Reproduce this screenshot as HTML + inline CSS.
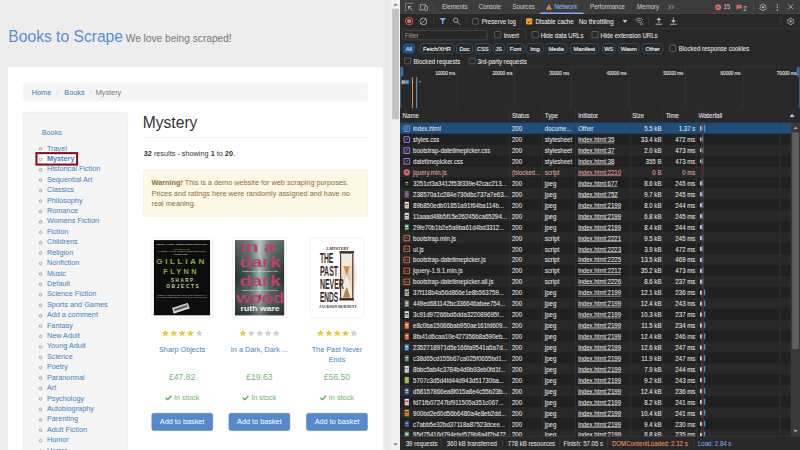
<!DOCTYPE html>
<html><head><meta charset="utf-8"><style>
*{box-sizing:border-box;margin:0;padding:0}
html,body{width:800px;height:450px;overflow:hidden;background:#ededed}
#root{position:absolute;left:0;top:0;width:1536px;height:864px;transform:scale(0.5208333);transform-origin:0 0;font-family:"Liberation Sans",sans-serif;overflow:hidden}
.a{position:absolute;white-space:nowrap}
#page{position:absolute;left:0;top:0;width:751px;height:864px;background:#ededed;overflow:hidden;color:#333;font-size:14px;line-height:20px}
#sb{position:absolute;left:751px;top:0;width:17px;height:864px;background:#f1f1f1}
#dt{position:absolute;left:768px;top:0;width:768px;height:864px;background:#282828;color:#e3e3e3;font-size:12px;overflow:hidden}
.bc{color:#ccc;padding:0 7.4px}
.lk{color:#337ab7}
.li{position:absolute;left:76px;top:0;height:20px;white-space:nowrap;color:#4380c2}
.li i{position:absolute;left:-1px;top:9px;width:6px;height:6px;border:1.3px solid #666;border-radius:50%}
.li span{position:absolute;left:14px;top:0}
.star{position:absolute;width:15px;height:15px}
.btn{position:absolute;height:34px;width:118px;background:#5589cc;border:1px solid #4f83c6;border-radius:4px;color:#fff;text-align:center;line-height:32px;font-size:14px}
.price{position:absolute;color:#72b572;font-size:16.5px;text-align:center;line-height:20px}
.stock{position:absolute;color:#6bb26b;font-size:14px;text-align:center;line-height:20px}
.ttl{position:absolute;color:#4783c4;font-size:14px;text-align:center;line-height:20px}
.t12{font-size:12.7px;line-height:14px;color:#ececec;transform:scaleX(.92);transform-origin:0 50%;-webkit-text-stroke:0.1px currentColor}
.r{transform-origin:100% 50%}
.t11{font-size:11.4px;line-height:14px;color:#e8e8e8;-webkit-text-stroke:.2px #e8e8e8}
.ic{width:14px;height:14px;display:block}
.cb{width:12.5px;height:12.5px;border:1.5px solid #8a8a8a;border-radius:2px}
.chip{top:82.5px;height:20px;border:1.5px solid #31669a;border-radius:7px;color:#f0f0f0;font-size:11px;line-height:18.5px;text-align:center}
.thumb{position:absolute;background:#fff;border:1px solid #e6e6e6;border-radius:4px;padding:4px}
</style></head><body><div id="root">
<div id="page">
<div class="a" style="left:16px;top:52px;font-size:30px;color:#5a8dd0;line-height:36px">Books to Scrape</div><div class="a" style="left:241.4px;top:54px;font-size:19.5px;color:#777;line-height:38px">We love being scraped!</div>
<div class="a" style="left:15px;top:129px;width:720px;height:760px;background:#fff"></div>
<div class="a" style="left:44px;top:159px;width:662px;height:36px;background:#f5f5f5;border-radius:4px"></div>
<div class="a" style="left:61px;top:167px;color:#337ab7">Home</div>
<div class="a" style="left:108px;top:167px;color:#ccc">/</div>
<div class="a" style="left:123.4px;top:167px;color:#337ab7">Books</div>
<div class="a" style="left:171.8px;top:167px;color:#ccc">/</div>
<div class="a" style="left:183.8px;top:167px;color:#777">Mystery</div>
<div class="a" style="left:44px;top:215px;width:201px;height:700px;background:#f5f5f5;border:1px solid #e3e3e3;border-radius:4px"></div>
<div class="a" style="left:80px;top:244px;color:#4380c2">Books</div>
<div class="a" style="left:68px;top:291.8px;width:82px;height:26.7px;border:4px solid #880d1f;background:#fff"></div>
<div class="li" style="top:274px"><i></i><span>Travel</span></div>
<div class="li" style="top:294px"><i></i><span style="font-weight:bold">Mystery</span></div>
<div class="li" style="top:314px"><i></i><span>Historical Fiction</span></div>
<div class="li" style="top:334px"><i></i><span>Sequential Art</span></div>
<div class="li" style="top:354px"><i></i><span>Classics</span></div>
<div class="li" style="top:374px"><i></i><span>Philosophy</span></div>
<div class="li" style="top:394px"><i></i><span>Romance</span></div>
<div class="li" style="top:414px"><i></i><span>Womens Fiction</span></div>
<div class="li" style="top:434px"><i></i><span>Fiction</span></div>
<div class="li" style="top:454px"><i></i><span>Childrens</span></div>
<div class="li" style="top:474px"><i></i><span>Religion</span></div>
<div class="li" style="top:494px"><i></i><span>Nonfiction</span></div>
<div class="li" style="top:514px"><i></i><span>Music</span></div>
<div class="li" style="top:534px"><i></i><span>Default</span></div>
<div class="li" style="top:554px"><i></i><span>Science Fiction</span></div>
<div class="li" style="top:574px"><i></i><span>Sports and Games</span></div>
<div class="li" style="top:594px"><i></i><span>Add a comment</span></div>
<div class="li" style="top:614px"><i></i><span>Fantasy</span></div>
<div class="li" style="top:634px"><i></i><span>New Adult</span></div>
<div class="li" style="top:654px"><i></i><span>Young Adult</span></div>
<div class="li" style="top:674px"><i></i><span>Science</span></div>
<div class="li" style="top:694px"><i></i><span>Poetry</span></div>
<div class="li" style="top:714px"><i></i><span>Paranormal</span></div>
<div class="li" style="top:734px"><i></i><span>Art</span></div>
<div class="li" style="top:754px"><i></i><span>Psychology</span></div>
<div class="li" style="top:774px"><i></i><span>Autobiography</span></div>
<div class="li" style="top:794px"><i></i><span>Parenting</span></div>
<div class="li" style="top:814px"><i></i><span>Adult Fiction</span></div>
<div class="li" style="top:834px"><i></i><span>Humor</span></div>
<div class="li" style="top:854px"><i></i><span>Horror</span></div>
<div class="li" style="top:874px"><i></i><span>Erotica</span></div>
<div class="a" style="left:274px;top:217px;font-size:30px;line-height:36px;color:#333">Mystery</div>
<div class="a" style="left:276px;top:263px;width:430px;height:1px;background:#eee"></div>
<div class="a" style="left:276px;top:284px"><b>32</b> results - showing <b>1</b> to <b>20</b>.</div>
<div class="a" style="left:275px;top:325px;width:431px;height:91px;background:#fcf8e3;border:1px solid #faebcc;border-radius:4px;padding:14px 15px;color:#8a6d3b;white-space:normal;line-height:20.5px"><b>Warning!</b> This is a demo website for web scraping purposes. Prices and ratings here were randomly assigned and have no real meaning.</div>
<div class="thumb" style="left:290.4px;top:456px;width:118.5px;height:155px"><svg width="108.5" height="145" viewBox="0 0 108 145" preserveAspectRatio="none" style="display:block"><rect width="108" height="145" fill="#0d0d0d"/>
<g font-family="Liberation Sans" font-weight="bold" text-anchor="start">
<text x="6" y="10.2" font-size="3.6" fill="#bdbdbd" textLength="96" lengthAdjust="spacingAndGlyphs">NEW YORK TIMES BESTSELLER</text>
<text x="37" y="19" font-size="2.8" fill="#7fae4a" textLength="32" lengthAdjust="spacingAndGlyphs">AUTHOR OF THE</text>
<text x="6" y="23.8" font-size="3.4" fill="#7fae4a" textLength="93" lengthAdjust="spacingAndGlyphs">#1 NEW YORK TIMES BESTSELLER</text>
<text x="39" y="28.3" font-size="3.4" fill="#c8c8c8" textLength="27" lengthAdjust="spacingAndGlyphs">GONE GIRL</text>
<text x="5" y="46.8" font-size="12.5" fill="#7fb048" letter-spacing="4" textLength="97" lengthAdjust="spacingAndGlyphs">GILLIAN</text>
<text x="18.5" y="65.6" font-size="12.5" fill="#7fb048" letter-spacing="4" textLength="68" lengthAdjust="spacingAndGlyphs">FLYNN</text>
<text x="33" y="81.3" font-size="8.5" fill="#b7d89a" letter-spacing="3" textLength="45.5" lengthAdjust="spacingAndGlyphs">SHARP</text>
<text x="24" y="92.7" font-size="8.5" fill="#b7d89a" letter-spacing="3" textLength="65.5" lengthAdjust="spacingAndGlyphs">OBJECTS</text>
<text x="6" y="107.6" font-size="3" fill="#9a9a9a" textLength="96" lengthAdjust="spacingAndGlyphs">"DEEPLY UNSETTLING WITH THE POWER OF A</text>
<text x="6" y="112" font-size="3" fill="#9a9a9a" textLength="96" lengthAdjust="spacingAndGlyphs">NIGHTMARE. BEST DEBUT OF THE YEAR" STEPHEN KING</text>
</g>
<g transform="rotate(-18 52 131)"><rect x="36" y="125" width="32" height="11" rx="1" fill="#c4c4c4"/><rect x="39" y="128.5" width="26" height="3.5" fill="#555"/><rect x="36" y="134.5" width="32" height="1.5" fill="#eee"/></g>
</svg></div>
<svg class="star" style="left:310.1px;top:632px" viewBox="0 0 24 24"><path fill="#e3cc2c" d="M12 1.5l3.1 7.2 7.8.6-5.9 5.1 1.8 7.6L12 17.9l-6.8 4.1 1.8-7.6L1.1 9.3l7.8-.6z"/></svg>
<svg class="star" style="left:326.20000000000005px;top:632px" viewBox="0 0 24 24"><path fill="#e3cc2c" d="M12 1.5l3.1 7.2 7.8.6-5.9 5.1 1.8 7.6L12 17.9l-6.8 4.1 1.8-7.6L1.1 9.3l7.8-.6z"/></svg>
<svg class="star" style="left:342.3px;top:632px" viewBox="0 0 24 24"><path fill="#e3cc2c" d="M12 1.5l3.1 7.2 7.8.6-5.9 5.1 1.8 7.6L12 17.9l-6.8 4.1 1.8-7.6L1.1 9.3l7.8-.6z"/></svg>
<svg class="star" style="left:358.40000000000003px;top:632px" viewBox="0 0 24 24"><path fill="#e3cc2c" d="M12 1.5l3.1 7.2 7.8.6-5.9 5.1 1.8 7.6L12 17.9l-6.8 4.1 1.8-7.6L1.1 9.3l7.8-.6z"/></svg>
<svg class="star" style="left:374.5px;top:632px" viewBox="0 0 24 24"><path fill="#d0d0d0" d="M12 1.5l3.1 7.2 7.8.6-5.9 5.1 1.8 7.6L12 17.9l-6.8 4.1 1.8-7.6L1.1 9.3l7.8-.6z"/></svg>
<div class="ttl" style="left:249.60000000000002px;width:200px;top:660px">Sharp Objects</div>
<div class="price" style="left:249.60000000000002px;width:200px;top:713px">£47.82</div>
<div class="stock" style="left:249.60000000000002px;width:200px;top:753px"><svg width="13" height="11" viewBox="0 0 16 13" style="vertical-align:-1px;margin-right:4px"><path d="M1.5 7l4.5 4.5L15 2" stroke="#5fae5f" stroke-width="3.4" fill="none"/></svg>In stock</div>
<div class="btn" style="left:290.6px;top:793px">Add to basket</div>
<div class="thumb" style="left:445.5px;top:456px;width:105.0px;height:155px"><svg width="95" height="145" viewBox="0 0 95 145" preserveAspectRatio="none" style="display:block"><defs>
<linearGradient id="g2h" x1="0" y1="0" x2="1" y2="0"><stop offset="0" stop-color="#22302e"/><stop offset=".3" stop-color="#405552"/><stop offset=".5" stop-color="#9fb4b0"/><stop offset=".7" stop-color="#405552"/><stop offset="1" stop-color="#22302e"/></linearGradient>
<linearGradient id="g2v" x1="0" y1="0" x2="0" y2="1"><stop offset="0" stop-color="#fff" stop-opacity=".25"/><stop offset=".5" stop-color="#fff" stop-opacity="0"/><stop offset="1" stop-color="#1d2624" stop-opacity=".45"/></linearGradient></defs>
<rect width="95" height="145" fill="url(#g2h)"/><rect width="95" height="145" fill="url(#g2v)"/>

<g fill="#b9406f" font-family="Liberation Sans" font-weight="bold">
<text x="11" y="22.5" font-size="29" textLength="66" lengthAdjust="spacingAndGlyphs">in a</text>
<text x="9" y="52.3" font-size="29" textLength="79" lengthAdjust="spacingAndGlyphs">dark</text>
<text x="9" y="88.5" font-size="29" textLength="79" lengthAdjust="spacingAndGlyphs">dark</text>
<text x="2" y="121" font-size="29" textLength="93" lengthAdjust="spacingAndGlyphs">wood</text></g>
<g fill="#e8e8e8" font-family="Liberation Serif" font-style="italic" font-size="5">
<text x="14" y="61" textLength="68" lengthAdjust="spacingAndGlyphs">someone's getting married</text>
<text x="14" y="97" textLength="68" lengthAdjust="spacingAndGlyphs">someone's getting murdered</text></g>
<rect x="46.5" y="104" width="4" height="10" rx="1.5" fill="#c03040"/>
<text x="11" y="137" font-size="13" fill="#f0f0f0" font-family="Liberation Sans" font-weight="bold" textLength="75" lengthAdjust="spacingAndGlyphs">ruth ware</text>
</svg></div>
<svg class="star" style="left:458.5px;top:632px" viewBox="0 0 24 24"><path fill="#e3cc2c" d="M12 1.5l3.1 7.2 7.8.6-5.9 5.1 1.8 7.6L12 17.9l-6.8 4.1 1.8-7.6L1.1 9.3l7.8-.6z"/></svg>
<svg class="star" style="left:474.6px;top:632px" viewBox="0 0 24 24"><path fill="#d0d0d0" d="M12 1.5l3.1 7.2 7.8.6-5.9 5.1 1.8 7.6L12 17.9l-6.8 4.1 1.8-7.6L1.1 9.3l7.8-.6z"/></svg>
<svg class="star" style="left:490.7px;top:632px" viewBox="0 0 24 24"><path fill="#d0d0d0" d="M12 1.5l3.1 7.2 7.8.6-5.9 5.1 1.8 7.6L12 17.9l-6.8 4.1 1.8-7.6L1.1 9.3l7.8-.6z"/></svg>
<svg class="star" style="left:506.8px;top:632px" viewBox="0 0 24 24"><path fill="#d0d0d0" d="M12 1.5l3.1 7.2 7.8.6-5.9 5.1 1.8 7.6L12 17.9l-6.8 4.1 1.8-7.6L1.1 9.3l7.8-.6z"/></svg>
<svg class="star" style="left:522.9px;top:632px" viewBox="0 0 24 24"><path fill="#d0d0d0" d="M12 1.5l3.1 7.2 7.8.6-5.9 5.1 1.8 7.6L12 17.9l-6.8 4.1 1.8-7.6L1.1 9.3l7.8-.6z"/></svg>
<div class="ttl" style="left:398.0px;width:200px;top:660px">In a Dark, Dark ...</div>
<div class="price" style="left:398.0px;width:200px;top:713px">£19.63</div>
<div class="stock" style="left:398.0px;width:200px;top:753px"><svg width="13" height="11" viewBox="0 0 16 13" style="vertical-align:-1px;margin-right:4px"><path d="M1.5 7l4.5 4.5L15 2" stroke="#5fae5f" stroke-width="3.4" fill="none"/></svg>In stock</div>
<div class="btn" style="left:439.0px;top:793px">Add to basket</div>
<div class="thumb" style="left:594.8px;top:456px;width:104.5px;height:155px"><svg width="94.5" height="145" viewBox="0 0 95 145" preserveAspectRatio="none" style="display:block"><defs>
<radialGradient id="g3" cx=".5" cy=".5" r=".5"><stop offset="0" stop-color="#c89a6a" stop-opacity=".75"/><stop offset=".7" stop-color="#d9b894" stop-opacity=".35"/><stop offset="1" stop-color="#fff" stop-opacity="0"/></radialGradient>
<linearGradient id="g3s" x1="0" y1="0" x2="0" y2="1"><stop offset="0" stop-color="#f3e6d2"/><stop offset=".45" stop-color="#d9b58a"/><stop offset=".55" stop-color="#efe2d0"/><stop offset="1" stop-color="#c9955a"/></linearGradient></defs>
<rect width="95" height="145" fill="#fff"/>
<ellipse cx="68" cy="68" rx="22" ry="54" fill="url(#g3)" opacity=".8"/>
<path d="M57 27h18q0 20-8 38q-1 3 0 6q8 18 8 39H57q0-21 8-39q1-3 0-6q-8-18-8-38z" fill="#f4ebe0"/>
<path d="M60 50h12q-3 10-5 16h-2q-2-6-5-16z" fill="#c98d52"/><path d="M59 110q4-14 7-20q3 6 7 20z" fill="#b8844e"/>
<rect x="52" y="21" width="28" height="5" fill="#4a3322"/><rect x="52" y="111" width="28" height="5" fill="#4a3322"/>
<rect x="53" y="26" width="2.5" height="85" fill="#5a3e28"/><rect x="76.5" y="26" width="2.5" height="85" fill="#5a3e28"/>
<text x="25.4" y="19" font-size="6.5" fill="#3a2a1e" font-style="italic" font-weight="bold" font-family="Liberation Serif" textLength="44" lengthAdjust="spacingAndGlyphs">A MYSTERY</text>
<g fill="#3b2a1f" font-family="Liberation Sans" font-weight="bold">
<text x="14.4" y="44.2" font-size="28" textLength="25.8" lengthAdjust="spacingAndGlyphs">THE</text>
<text x="14.4" y="68.5" font-size="27" textLength="35" lengthAdjust="spacingAndGlyphs">PAST</text>
<text x="14.4" y="93.9" font-size="27" textLength="46" lengthAdjust="spacingAndGlyphs">NEVER</text>
<text x="14.4" y="119.3" font-size="27" textLength="35" lengthAdjust="spacingAndGlyphs">ENDS</text></g>
<text x="12.6" y="131" font-size="7" fill="#3a2a1e" font-weight="bold" font-family="Liberation Serif" textLength="73" lengthAdjust="spacingAndGlyphs">JACKSON BURNETT</text>
</svg></div>
<svg class="star" style="left:607.5px;top:632px" viewBox="0 0 24 24"><path fill="#e3cc2c" d="M12 1.5l3.1 7.2 7.8.6-5.9 5.1 1.8 7.6L12 17.9l-6.8 4.1 1.8-7.6L1.1 9.3l7.8-.6z"/></svg>
<svg class="star" style="left:623.6px;top:632px" viewBox="0 0 24 24"><path fill="#e3cc2c" d="M12 1.5l3.1 7.2 7.8.6-5.9 5.1 1.8 7.6L12 17.9l-6.8 4.1 1.8-7.6L1.1 9.3l7.8-.6z"/></svg>
<svg class="star" style="left:639.7px;top:632px" viewBox="0 0 24 24"><path fill="#e3cc2c" d="M12 1.5l3.1 7.2 7.8.6-5.9 5.1 1.8 7.6L12 17.9l-6.8 4.1 1.8-7.6L1.1 9.3l7.8-.6z"/></svg>
<svg class="star" style="left:655.8px;top:632px" viewBox="0 0 24 24"><path fill="#e3cc2c" d="M12 1.5l3.1 7.2 7.8.6-5.9 5.1 1.8 7.6L12 17.9l-6.8 4.1 1.8-7.6L1.1 9.3l7.8-.6z"/></svg>
<svg class="star" style="left:671.9px;top:632px" viewBox="0 0 24 24"><path fill="#d0d0d0" d="M12 1.5l3.1 7.2 7.8.6-5.9 5.1 1.8 7.6L12 17.9l-6.8 4.1 1.8-7.6L1.1 9.3l7.8-.6z"/></svg>
<div class="ttl" style="left:547.0px;width:200px;top:660px">The Past Never</div>
<div class="ttl" style="left:547.0px;width:200px;top:680px">Ends</div>
<div class="price" style="left:547.0px;width:200px;top:713px">£56.50</div>
<div class="stock" style="left:547.0px;width:200px;top:753px"><svg width="13" height="11" viewBox="0 0 16 13" style="vertical-align:-1px;margin-right:4px"><path d="M1.5 7l4.5 4.5L15 2" stroke="#5fae5f" stroke-width="3.4" fill="none"/></svg>In stock</div>
<div class="btn" style="left:588.0px;top:793px">Add to basket</div>
</div>
<div id="sb"><div style="position:absolute;left:2px;top:17px;width:13px;height:212px;background:#c1c1c1"></div><svg style="position:absolute;left:4px;top:6px" width="9" height="5" viewBox="0 0 9 5"><path d="M0 5h9L4.5 0z" fill="#707070"/></svg><svg style="position:absolute;left:4px;top:851px" width="9" height="5" viewBox="0 0 9 5"><path d="M0 0h9L4.5 5z" fill="#707070"/></svg></div>
<div id="dt">
<div class="a" style="left:0;top:0;width:768px;height:27px;background:#3c3c3c;border-bottom:1px solid #4b4b4b"></div>
<svg class="a" style="left:9px;top:5px" width="17" height="17" viewBox="0 0 16 16"><path d="M1 1.5h2.2M4.8 1.5h2.2M8.6 1.5h2.2M12.4 1.5h2.1M1.5 3.3v2.2M1.5 7.1v2.2M1.5 10.9v2.2M1.5 14.5h2" stroke="#c4c4c4" stroke-width="1.3" fill="none"/><path d="M14.5 14.5L7 7M7 7v5M7 7h5" stroke="#c4c4c4" stroke-width="1.5" fill="none"/></svg>
<svg class="a" style="left:36px;top:5px" width="18" height="17" viewBox="0 0 18 16"><path d="M3 12V3.5h10.5V6" stroke="#c4c4c4" stroke-width="1.3" fill="none"/><path d="M0.8 13.5h10" stroke="#c4c4c4" stroke-width="1.4"/><rect x="11.5" y="6.5" width="5.5" height="8" rx="1" stroke="#c4c4c4" stroke-width="1.3" fill="none"/></svg>
<div class="a" style="left:64px;top:6px;width:1px;height:15px;background:#5a5a5a"></div>
<div class="a t12" style="left:80.6px;top:7px;color:#c7c7c7;font-size:12.7px">Elements</div>
<div class="a t12" style="left:151.2px;top:7px;color:#c7c7c7;font-size:12.7px">Console</div>
<div class="a t12" style="left:216px;top:7px;color:#c7c7c7;font-size:12.7px">Sources</div>
<div class="a t12" style="left:296px;top:7px;color:#8ab4f8;font-size:13.2px">Network</div>
<div class="a t12" style="left:364.8px;top:7px;color:#c7c7c7;font-size:12.7px">Performance</div>
<div class="a t12" style="left:454.5px;top:7px;color:#c7c7c7;font-size:12.7px">Memory</div>
<svg class="a" style="left:280px;top:6.5px" width="12" height="12" viewBox="0 0 12 12"><path d="M6 0.8L11.5 11H0.5z" fill="#f28b54"/><path d="M6 4.2v3.6M6 8.8v1.2" stroke="#3c3c3c" stroke-width="1.3"/></svg>
<div class="a" style="left:268.8px;top:24px;width:84px;height:3px;background:#7cacf8;border-radius:2px 2px 0 0"></div>
<svg class="a" style="left:514px;top:8px" width="13" height="11" viewBox="0 0 13 11"><path d="M1 1l4.5 4.5L1 10M7 1l4.5 4.5L7 10" stroke="#c4c4c4" stroke-width="1.3" fill="none"/></svg>
<svg class="a" style="left:605px;top:7.5px" width="12" height="12" viewBox="0 0 12 12"><circle cx="6" cy="6" r="5.8" fill="#e46962"/><path d="M3.8 3.8l4.4 4.4M8.2 3.8L3.8 8.2" stroke="#3c3c3c" stroke-width="1.3"/></svg>
<div class="a t12" style="left:621px;top:7px;color:#c7c7c7">15</div>
<svg class="a" style="left:644.5px;top:7.5px" width="12" height="12" viewBox="0 0 12 12"><path d="M1 1h10v7.5H4L1 11z" fill="#e46962"/><path d="M6 3v2.5" stroke="#3c3c3c" stroke-width="1.2"/></svg>
<div class="a t12" style="left:658.6px;top:10px;color:#c7c7c7">2</div>
<div class="a" style="left:677.8px;top:6px;width:1px;height:15px;background:#5a5a5a"></div>
<svg class="a" style="left:689px;top:5.5px" width="16" height="16" viewBox="0 0 16 16"><path d="M6.56 3.00 L6.95 1.48 L9.05 1.48 L9.44 3.00 L11.61 4.26 L13.12 3.83 L14.17 5.65 L13.05 6.75 L13.05 9.25 L14.17 10.35 L13.12 12.17 L11.61 11.74 L9.44 13.00 L9.05 14.52 L6.95 14.52 L6.56 13.00 L4.39 11.74 L2.88 12.17 L1.83 10.35 L2.95 9.25 L2.95 6.75 L1.83 5.65 L2.88 3.83 L4.39 4.26z" fill="none" stroke="#c4c4c4" stroke-width="1.4" stroke-linejoin="round"/><circle cx="8" cy="8" r="2.2" fill="#c4c4c4"/></svg>
<svg class="a" style="left:722px;top:5.5px" width="5" height="16" viewBox="0 0 5 16"><circle cx="2.5" cy="3" r="1.4" fill="#c4c4c4"/><circle cx="2.5" cy="8" r="1.4" fill="#c4c4c4"/><circle cx="2.5" cy="13" r="1.4" fill="#c4c4c4"/></svg>
<svg class="a" style="left:744px;top:7px" width="12" height="12" viewBox="0 0 12 12"><path d="M1 1l10 10M11 1L1 11" stroke="#c4c4c4" stroke-width="1.5"/></svg>
<div class="a" style="left:0;top:28px;width:768px;height:27px;background:#282828;border-bottom:1px solid #3d3d3d"></div>
<svg class="a" style="left:8.5px;top:32px" width="17" height="17" viewBox="0 0 17 17"><circle cx="8.5" cy="8.5" r="7.2" fill="none" stroke="#e46962" stroke-width="1.7"/><circle cx="8.5" cy="8.5" r="4.2" fill="#e46962"/></svg>
<svg class="a" style="left:37px;top:32.5px" width="16" height="16" viewBox="0 0 16 16"><circle cx="8" cy="8" r="6.5" fill="none" stroke="#c4c4c4" stroke-width="1.5"/><path d="M3.5 12.5l9-9" stroke="#c4c4c4" stroke-width="1.5"/></svg>
<div class="a" style="left:64.3px;top:33px;width:1px;height:15px;background:#4a4a4a"></div>
<svg class="a" style="left:75px;top:34px" width="14" height="13" viewBox="0 0 14 13"><path d="M0.5 0.5h13L8.3 6v6.5H5.7V6z" fill="#7cacf8"/></svg>
<svg class="a" style="left:101px;top:32.5px" width="16" height="16" viewBox="0 0 16 16"><circle cx="6" cy="6" r="4.3" fill="none" stroke="#c4c4c4" stroke-width="1.5"/><path d="M9.2 9.2l5.3 5.3" stroke="#c4c4c4" stroke-width="1.6"/></svg>
<div class="a" style="left:127.7px;top:33px;width:1px;height:15px;background:#4a4a4a"></div>
<div class="a cb" style="left:138.5px;top:34.5px"></div>
<div class="a t12" style="left:157.2px;top:35.3px">Preserve log</div>
<div class="a" style="left:231.6px;top:33px;width:1px;height:15px;background:#4a4a4a"></div>
<div class="a" style="left:241.7px;top:34.5px;width:12.5px;height:12.5px;background:#f5a623;border-radius:2px"><svg width="12.5" height="12.5" viewBox="0 0 12 12" style="display:block"><path d="M2.5 6.2l2.4 2.4 4.8-4.8" stroke="#282828" stroke-width="1.6" fill="none"/></svg></div>
<div class="a t12" style="left:260.4px;top:35.3px">Disable cache</div>
<div class="a t12" style="left:343px;top:35.3px;font-size:13.5px">No throttling</div>
<svg class="a" style="left:427px;top:38px" width="10" height="6" viewBox="0 0 10 6"><path d="M0 0h10L5 6z" fill="#c4c4c4"/></svg>
<svg class="a" style="left:449.5px;top:32px" width="18" height="17" viewBox="0 0 18 17"><path d="M1.5 6.5a10 10 0 0 1 15 0M4 9.2a6.5 6.5 0 0 1 10 0M6.5 11.8a3 3 0 0 1 5 0" stroke="#c4c4c4" stroke-width="1.3" fill="none"/><circle cx="13.5" cy="13.5" r="2.2" fill="#282828" stroke="#c4c4c4" stroke-width="1.1"/></svg>
<div class="a" style="left:476.5px;top:33px;width:1px;height:15px;background:#4a4a4a"></div>
<svg class="a" style="left:488.5px;top:32px" width="16" height="16" viewBox="0 0 16 16"><path d="M8 12V5" stroke="#c4c4c4" stroke-width="1.6" fill="none"/><path d="M3.5 6.5L8 1.5l4.5 5z" fill="#c4c4c4"/><path d="M1.5 14.5h13" stroke="#c4c4c4" stroke-width="1.6"/></svg>
<svg class="a" style="left:516.5px;top:32px" width="16" height="16" viewBox="0 0 16 16"><path d="M8 1.5V8" stroke="#c4c4c4" stroke-width="1.6" fill="none"/><path d="M3.5 7L8 12l4.5-5z" fill="#c4c4c4"/><path d="M1.5 14.5h13" stroke="#c4c4c4" stroke-width="1.6"/></svg>
<div class="a" style="left:731px;top:33px;width:1px;height:15px;background:#4a4a4a"></div>
<svg class="a" style="left:742px;top:32.5px" width="16" height="16" viewBox="0 0 16 16"><path d="M6.56 3.00 L6.95 1.48 L9.05 1.48 L9.44 3.00 L11.61 4.26 L13.12 3.83 L14.17 5.65 L13.05 6.75 L13.05 9.25 L14.17 10.35 L13.12 12.17 L11.61 11.74 L9.44 13.00 L9.05 14.52 L6.95 14.52 L6.56 13.00 L4.39 11.74 L2.88 12.17 L1.83 10.35 L2.95 9.25 L2.95 6.75 L1.83 5.65 L2.88 3.83 L4.39 4.26z" fill="none" stroke="#c4c4c4" stroke-width="1.4" stroke-linejoin="round"/><circle cx="8" cy="8" r="2.2" fill="#c4c4c4"/></svg>
<div class="a" style="left:4.3px;top:57.5px;width:164px;height:19px;border:1px solid #5e5e5e;border-radius:4px"></div>
<div class="a t12" style="left:9px;top:62.2px;color:#9a9a9a;font-size:13px">Filter</div>
<div class="a cb" style="left:181px;top:60px"></div>
<div class="a t12" style="left:199.2px;top:62.2px">Invert</div>
<div class="a" style="left:240px;top:59px;width:1px;height:15px;background:#4a4a4a"></div>
<div class="a cb" style="left:253px;top:60px"></div>
<div class="a t12" style="left:270.2px;top:62.2px">Hide data URLs</div>
<div class="a cb" style="left:368.2px;top:60px"></div>
<div class="a t12" style="left:385.4px;top:62.2px">Hide extension URLs</div>
<div class="a chip" style="left:5px;width:24.3px;background:#1f4f82;border-color:#1f4f82;color:#fff">All</div>
<div class="a chip" style="left:38.4px;width:65.3px;-webkit-text-stroke:.25px #f0f0f0">Fetch/XHR</div>
<div class="a chip" style="left:107.5px;width:32.9px;-webkit-text-stroke:.25px #f0f0f0">Doc</div>
<div class="a chip" style="left:144px;width:30.5px;-webkit-text-stroke:.25px #f0f0f0">CSS</div>
<div class="a chip" style="left:178.7px;width:21.9px;-webkit-text-stroke:.25px #f0f0f0">JS</div>
<div class="a chip" style="left:205px;width:33.6px;-webkit-text-stroke:.25px #f0f0f0">Font</div>
<div class="a chip" style="left:242.4px;width:33.6px;-webkit-text-stroke:.25px #f0f0f0">Img</div>
<div class="a chip" style="left:279.4px;width:41.2px;-webkit-text-stroke:.25px #f0f0f0">Media</div>
<div class="a chip" style="left:326.4px;width:55.2px;-webkit-text-stroke:.25px #f0f0f0">Manifest</div>
<div class="a chip" style="left:387.8px;width:26.0px;-webkit-text-stroke:.25px #f0f0f0">WS</div>
<div class="a chip" style="left:418.6px;width:41.2px;-webkit-text-stroke:.25px #f0f0f0">Wasm</div>
<div class="a chip" style="left:464.6px;width:40.8px;-webkit-text-stroke:.25px #f0f0f0">Other</div>
<div class="a" style="left:34px;top:86px;width:1px;height:13px;background:#4a4a4a"></div>
<div class="a cb" style="left:517px;top:86.4px"></div>
<div class="a t12" style="left:535.2px;top:87px">Blocked response cookies</div>
<div class="a cb" style="left:8.4px;top:110.5px"></div>
<div class="a t12" style="left:26.4px;top:111px">Blocked requests</div>
<div class="a cb" style="left:132px;top:110.5px"></div>
<div class="a t12" style="left:148.8px;top:111px">3rd-party requests</div>
<div class="a" style="left:0;top:128px;width:768px;height:80px;background:#282828;border-top:1px solid #3d3d3d;border-bottom:1px solid #3d3d3d"></div>
<div class="a" style="left:110.4px;top:129px;width:1px;height:79px;background:#3d3d3d"></div>
<div class="a t11" style="left:26.4px;width:80px;text-align:right;top:133px;transform:scaleX(.77);transform-origin:100% 50%">10000 ms</div>
<div class="a" style="left:219.9px;top:129px;width:1px;height:79px;background:#3d3d3d"></div>
<div class="a t11" style="left:135.9px;width:80px;text-align:right;top:133px;transform:scaleX(.77);transform-origin:100% 50%">20000 ms</div>
<div class="a" style="left:329.4px;top:129px;width:1px;height:79px;background:#3d3d3d"></div>
<div class="a t11" style="left:245.4px;width:80px;text-align:right;top:133px;transform:scaleX(.77);transform-origin:100% 50%">30000 ms</div>
<div class="a" style="left:438.9px;top:129px;width:1px;height:79px;background:#3d3d3d"></div>
<div class="a t11" style="left:354.9px;width:80px;text-align:right;top:133px;transform:scaleX(.77);transform-origin:100% 50%">40000 ms</div>
<div class="a" style="left:548.4px;top:129px;width:1px;height:79px;background:#3d3d3d"></div>
<div class="a t11" style="left:464.4px;width:80px;text-align:right;top:133px;transform:scaleX(.77);transform-origin:100% 50%">50000 ms</div>
<div class="a" style="left:657.9px;top:129px;width:1px;height:79px;background:#3d3d3d"></div>
<div class="a t11" style="left:573.9px;width:80px;text-align:right;top:133px;transform:scaleX(.77);transform-origin:100% 50%">60000 ms</div>
<div class="a t11" style="left:682px;width:80px;text-align:right;top:133px;transform:scaleX(.77);transform-origin:100% 50%">70000 ms</div>
<div class="a" style="left:0;top:129px;width:6px;height:18px;background:#3b6e9f;border:1px solid #4a8fd8;border-radius:0 3px 3px 0"></div>
<div class="a" style="left:0;top:129px;width:2px;height:79px;background:#35608a"></div>
<div class="a" style="left:762px;top:129px;width:6px;height:18px;background:#3b6e9f;border:1px solid #4a8fd8;border-radius:3px 0 0 3px"></div>
<div class="a" style="left:766px;top:129px;width:2px;height:79px;background:#35608a"></div>
<div class="a" style="left:2px;top:153px;width:16px;height:9px;border:1.5px solid #1f4e7d;background:linear-gradient(90deg,#e8c040 0 25%,#c88ad8 25% 45%,#38b288 45% 70%,#5a9ae8 70%)"></div>
<div class="a" style="left:22px;top:156px;width:4px;height:2px;background:#4a8fd8"></div><div class="a" style="left:36px;top:156px;width:4px;height:2px;background:#38b288"></div>
<div class="a" style="left:23px;top:148px;width:2px;height:60px;background:#d9894a"></div>
<div class="a" style="left:31px;top:148px;width:2px;height:60px;background:#5ba0d0"></div>
<div class="a" style="left:0;top:208px;width:768px;height:28px;background:#282828;border-bottom:1px solid #3d3d3d"></div>
<div class="a t12" style="left:5.4px;top:215px">Name</div>
<div class="a t12" style="left:214.6px;top:215px">Status</div>
<div class="a t12" style="left:278.4px;top:215px">Type</div>
<div class="a t12" style="left:341.8px;top:215px">Initiator</div>
<div class="a t12" style="left:446.4px;top:215px">Size</div>
<div class="a t12" style="left:509.8px;top:215px">Time</div>
<div class="a t12" style="left:572.6px;top:215px">Waterfall</div>
<svg class="a" style="left:748px;top:218px" width="10" height="7" viewBox="0 0 10 7"><path d="M0 7h10L5 0z" fill="#c4c4c4"/></svg>
<div class="a" style="left:0;top:236px;width:751px;height:21px;background:#1f4e7d"></div>
<div class="a" style="left:5.5px;top:240px"><svg class="ic" viewBox="0 0 14 14"><rect x="1.5" y="1.5" width="11" height="11" rx="1.5" fill="none" stroke="#8ab4f8" stroke-width="1.4"/><path d="M4 5.5h6M4 8h6M4 10.3h3" stroke="#8ab4f8" stroke-width="1.1"/></svg></div>
<div class="a t12" style="left:24.8px;top:240.5px;color:#e8e8e8">index.html</div>
<div class="a t12" style="left:214.6px;top:240.5px;color:#e8e8e8">200</div>
<div class="a t12" style="left:278.4px;top:240.5px;color:#e8e8e8">docume...</div>
<div class="a t12" style="left:341.8px;top:240.5px;color:#e8e8e8;">Other</div>
<div class="a t12 r" style="left:445px;width:57px;text-align:right;top:240.5px;color:#e8e8e8">5.5 kB</div>
<div class="a t12 r" style="left:506px;width:61px;text-align:right;top:240.5px;color:#e8e8e8">1.37 s</div>
<div class="a" style="left:576px;top:242px;width:3px;height:9px;background:#c8c8c8"></div><div class="a" style="left:580px;top:242px;width:2px;height:9px;background:#38b288"></div><div class="a" style="left:582px;top:240px;width:4px;height:13px;background:#4a8fd8"></div>
<div class="a" style="left:0;top:257px;width:751px;height:21px;background:#202020"></div>
<div class="a" style="left:5.5px;top:261px"><svg class="ic" viewBox="0 0 14 14"><rect x="1.5" y="1.5" width="11" height="11" rx="1.8" fill="none" stroke="#9d74d9" stroke-width="2"/><path d="M4.5 9.5l5-5" stroke="#b58cf0" stroke-width="1.5"/></svg></div>
<div class="a t12" style="left:24.8px;top:261.5px;color:#e8e8e8">styles.css</div>
<div class="a t12" style="left:214.6px;top:261.5px;color:#e8e8e8">200</div>
<div class="a t12" style="left:278.4px;top:261.5px;color:#e8e8e8">stylesheet</div>
<div class="a t12" style="left:341.8px;top:261.5px;color:#e8e8e8;text-decoration:underline;">index.html:35</div>
<div class="a t12 r" style="left:445px;width:57px;text-align:right;top:261.5px;color:#e8e8e8">33.4 kB</div>
<div class="a t12 r" style="left:506px;width:61px;text-align:right;top:261.5px;color:#e8e8e8">472 ms</div>
<div class="a" style="left:576px;top:264px;width:3px;height:7px;background:#c8c8c8"></div><div class="a" style="left:580px;top:262px;width:3px;height:11px;background:#38b2a0"></div>
<div class="a" style="left:0;top:278px;width:751px;height:21px;background:#282828"></div>
<div class="a" style="left:5.5px;top:282px"><svg class="ic" viewBox="0 0 14 14"><rect x="1.5" y="1.5" width="11" height="11" rx="1.8" fill="none" stroke="#9d74d9" stroke-width="2"/><path d="M4.5 9.5l5-5" stroke="#b58cf0" stroke-width="1.5"/></svg></div>
<div class="a t12" style="left:24.8px;top:282.5px;color:#e8e8e8">bootstrap-datetimepicker.css</div>
<div class="a t12" style="left:214.6px;top:282.5px;color:#e8e8e8">200</div>
<div class="a t12" style="left:278.4px;top:282.5px;color:#e8e8e8">stylesheet</div>
<div class="a t12" style="left:341.8px;top:282.5px;color:#e8e8e8;text-decoration:underline;">index.html:37</div>
<div class="a t12 r" style="left:445px;width:57px;text-align:right;top:282.5px;color:#e8e8e8">2.0 kB</div>
<div class="a t12 r" style="left:506px;width:61px;text-align:right;top:282.5px;color:#e8e8e8">473 ms</div>
<div class="a" style="left:576px;top:285px;width:3px;height:7px;background:#c8c8c8"></div><div class="a" style="left:580px;top:283px;width:3px;height:11px;background:#38b2a0"></div>
<div class="a" style="left:0;top:299px;width:751px;height:21px;background:#202020"></div>
<div class="a" style="left:5.5px;top:303px"><svg class="ic" viewBox="0 0 14 14"><rect x="1.5" y="1.5" width="11" height="11" rx="1.8" fill="none" stroke="#9d74d9" stroke-width="2"/><path d="M4.5 9.5l5-5" stroke="#b58cf0" stroke-width="1.5"/></svg></div>
<div class="a t12" style="left:24.8px;top:303.5px;color:#e8e8e8">datetimepicker.css</div>
<div class="a t12" style="left:214.6px;top:303.5px;color:#e8e8e8">200</div>
<div class="a t12" style="left:278.4px;top:303.5px;color:#e8e8e8">stylesheet</div>
<div class="a t12" style="left:341.8px;top:303.5px;color:#e8e8e8;text-decoration:underline;">index.html:38</div>
<div class="a t12 r" style="left:445px;width:57px;text-align:right;top:303.5px;color:#e8e8e8">355 B</div>
<div class="a t12 r" style="left:506px;width:61px;text-align:right;top:303.5px;color:#e8e8e8">473 ms</div>
<div class="a" style="left:576px;top:306px;width:3px;height:7px;background:#c8c8c8"></div><div class="a" style="left:580px;top:304px;width:3px;height:11px;background:#38b2a0"></div>
<div class="a" style="left:0;top:320px;width:751px;height:21px;background:#282828"></div>
<div class="a" style="left:5.5px;top:324px"><svg class="ic" viewBox="0 0 14 14"><circle cx="7" cy="7" r="6" fill="#e46962"/><path d="M4.6 4.6l4.8 4.8M9.4 4.6l-4.8 4.8" stroke="#282828" stroke-width="1.5"/></svg></div>
<div class="a t12" style="left:24.8px;top:324.5px;color:#e8aaa4">jquery.min.js</div>
<div class="a t12" style="left:214.6px;top:324.5px;color:#e8aaa4">(blocked...</div>
<div class="a t12" style="left:278.4px;top:324.5px;color:#e8aaa4">script</div>
<div class="a t12" style="left:341.8px;top:324.5px;color:#e8aaa4;text-decoration:underline;">index.html:2210</div>
<div class="a t12 r" style="left:445px;width:57px;text-align:right;top:324.5px;color:#e8aaa4">0 B</div>
<div class="a t12 r" style="left:506px;width:61px;text-align:right;top:324.5px;color:#e8aaa4">0 ms</div>
<div class="a" style="left:0;top:341px;width:751px;height:21px;background:#202020"></div>
<div class="a" style="left:5.5px;top:345px"><svg class="ic" viewBox="0 0 14 14"><rect x="3" y="0.5" width="8" height="13" fill="#111"/><rect x="4" y="4" width="6" height="3" fill="#8cc152"/><rect x="4" y="9" width="6" height="2" fill="#8cc152" opacity=".7"/></svg></div>
<div class="a t12" style="left:24.8px;top:345.5px;color:#e8e8e8">3251cf3a3412f53f339e42cac213...</div>
<div class="a t12" style="left:214.6px;top:345.5px;color:#e8e8e8">200</div>
<div class="a t12" style="left:278.4px;top:345.5px;color:#e8e8e8">jpeg</div>
<div class="a t12" style="left:341.8px;top:345.5px;color:#e8e8e8;text-decoration:underline;">index.html:677</div>
<div class="a t12 r" style="left:445px;width:57px;text-align:right;top:345.5px;color:#e8e8e8">8.6 kB</div>
<div class="a t12 r" style="left:506px;width:61px;text-align:right;top:345.5px;color:#e8e8e8">245 ms</div>
<div class="a" style="left:575.6px;top:347.5px;width:4.6px;height:8px;background:#d8d8e4"></div><div class="a" style="left:580px;top:346px;width:2.5px;height:11px;background:#3f9ad8"></div>
<div class="a" style="left:0;top:362px;width:751px;height:21px;background:#282828"></div>
<div class="a" style="left:5.5px;top:366px"><svg class="ic" viewBox="0 0 14 14"><rect x="3" y="0.5" width="8" height="13" fill="#5a6d68"/><rect x="4" y="4" width="6" height="3" fill="#c2477a"/><rect x="4" y="9" width="6" height="2" fill="#c2477a" opacity=".7"/></svg></div>
<div class="a t12" style="left:24.8px;top:366.5px;color:#e8e8e8">238570a1c284e730dbc737a7e63...</div>
<div class="a t12" style="left:214.6px;top:366.5px;color:#e8e8e8">200</div>
<div class="a t12" style="left:278.4px;top:366.5px;color:#e8e8e8">jpeg</div>
<div class="a t12" style="left:341.8px;top:366.5px;color:#e8e8e8;text-decoration:underline;">index.html:752</div>
<div class="a t12 r" style="left:445px;width:57px;text-align:right;top:366.5px;color:#e8e8e8">9.7 kB</div>
<div class="a t12 r" style="left:506px;width:61px;text-align:right;top:366.5px;color:#e8e8e8">245 ms</div>
<div class="a" style="left:575.6px;top:368.5px;width:4.6px;height:8px;background:#d8d8e4"></div><div class="a" style="left:580px;top:367px;width:2.5px;height:11px;background:#3f9ad8"></div>
<div class="a" style="left:0;top:383px;width:751px;height:21px;background:#202020"></div>
<div class="a" style="left:5.5px;top:387px"><svg class="ic" viewBox="0 0 14 14"><rect x="3" y="0.5" width="8" height="13" fill="#f4f0e8"/><rect x="4" y="4" width="6" height="3" fill="#7a5a3a"/><rect x="4" y="9" width="6" height="2" fill="#7a5a3a" opacity=".7"/></svg></div>
<div class="a t12" style="left:24.8px;top:387.5px;color:#e8e8e8">89b850edb01851a91f64ba114b...</div>
<div class="a t12" style="left:214.6px;top:387.5px;color:#e8e8e8">200</div>
<div class="a t12" style="left:278.4px;top:387.5px;color:#e8e8e8">jpeg</div>
<div class="a t12" style="left:341.8px;top:387.5px;color:#e8e8e8;text-decoration:underline;">index.html:2199</div>
<div class="a t12 r" style="left:445px;width:57px;text-align:right;top:387.5px;color:#e8e8e8">8.0 kB</div>
<div class="a t12 r" style="left:506px;width:61px;text-align:right;top:387.5px;color:#e8e8e8">244 ms</div>
<div class="a" style="left:575.6px;top:389.5px;width:4.6px;height:8px;background:#d8d8e4"></div><div class="a" style="left:580px;top:388px;width:2.5px;height:11px;background:#3f9ad8"></div>
<div class="a" style="left:0;top:404px;width:751px;height:21px;background:#282828"></div>
<div class="a" style="left:5.5px;top:408px"><svg class="ic" viewBox="0 0 14 14"><rect x="3" y="0.5" width="8" height="13" fill="#f2efe6"/><rect x="4" y="4" width="6" height="3" fill="#555"/><rect x="4" y="9" width="6" height="2" fill="#555" opacity=".7"/></svg></div>
<div class="a t12" style="left:24.8px;top:408.5px;color:#e8e8e8">11aaad48b5f15e262456ca65294...</div>
<div class="a t12" style="left:214.6px;top:408.5px;color:#e8e8e8">200</div>
<div class="a t12" style="left:278.4px;top:408.5px;color:#e8e8e8">jpeg</div>
<div class="a t12" style="left:341.8px;top:408.5px;color:#e8e8e8;text-decoration:underline;">index.html:2199</div>
<div class="a t12 r" style="left:445px;width:57px;text-align:right;top:408.5px;color:#e8e8e8">6.8 kB</div>
<div class="a t12 r" style="left:506px;width:61px;text-align:right;top:408.5px;color:#e8e8e8">245 ms</div>
<div class="a" style="left:575.6px;top:410.5px;width:4.6px;height:8px;background:#d8d8e4"></div><div class="a" style="left:580px;top:409px;width:2.5px;height:11px;background:#3f9ad8"></div>
<div class="a" style="left:0;top:425px;width:751px;height:21px;background:#202020"></div>
<div class="a" style="left:5.5px;top:429px"><svg class="ic" viewBox="0 0 14 14"><rect x="3" y="0.5" width="8" height="13" fill="#3a7a3a"/><rect x="4" y="4" width="6" height="3" fill="#eee"/><rect x="4" y="9" width="6" height="2" fill="#eee" opacity=".7"/></svg></div>
<div class="a t12" style="left:24.8px;top:429.5px;color:#e8e8e8">29fe70b1b2e5a9ba61d4bd3312...</div>
<div class="a t12" style="left:214.6px;top:429.5px;color:#e8e8e8">200</div>
<div class="a t12" style="left:278.4px;top:429.5px;color:#e8e8e8">jpeg</div>
<div class="a t12" style="left:341.8px;top:429.5px;color:#e8e8e8;text-decoration:underline;">index.html:2199</div>
<div class="a t12 r" style="left:445px;width:57px;text-align:right;top:429.5px;color:#e8e8e8">8.4 kB</div>
<div class="a t12 r" style="left:506px;width:61px;text-align:right;top:429.5px;color:#e8e8e8">244 ms</div>
<div class="a" style="left:575.6px;top:431.5px;width:4.6px;height:8px;background:#d8d8e4"></div><div class="a" style="left:580px;top:430px;width:2.5px;height:11px;background:#3f9ad8"></div>
<div class="a" style="left:0;top:446px;width:751px;height:21px;background:#282828"></div>
<div class="a" style="left:5.5px;top:450px"><svg class="ic" viewBox="0 0 14 14"><rect x="1.5" y="1.5" width="11" height="11" rx="1.5" fill="none" stroke="#d0703e" stroke-width="2"/><path d="M5 5.5v3M9 5.5v3" stroke="#d0703e" stroke-width="1.6" fill="none"/></svg></div>
<div class="a t12" style="left:24.8px;top:450.5px;color:#e8e8e8">bootstrap.min.js</div>
<div class="a t12" style="left:214.6px;top:450.5px;color:#e8e8e8">200</div>
<div class="a t12" style="left:278.4px;top:450.5px;color:#e8e8e8">script</div>
<div class="a t12" style="left:341.8px;top:450.5px;color:#e8e8e8;text-decoration:underline;">index.html:2221</div>
<div class="a t12 r" style="left:445px;width:57px;text-align:right;top:450.5px;color:#e8e8e8">9.5 kB</div>
<div class="a t12 r" style="left:506px;width:61px;text-align:right;top:450.5px;color:#e8e8e8">245 ms</div>
<div class="a" style="left:575.6px;top:452.5px;width:4.6px;height:8px;background:#d8d8e4"></div><div class="a" style="left:580px;top:451px;width:2.5px;height:11px;background:#3f9ad8"></div>
<div class="a" style="left:0;top:467px;width:751px;height:21px;background:#202020"></div>
<div class="a" style="left:5.5px;top:471px"><svg class="ic" viewBox="0 0 14 14"><rect x="1.5" y="1.5" width="11" height="11" rx="1.5" fill="none" stroke="#d0703e" stroke-width="2"/><path d="M5 5.5v3M9 5.5v3" stroke="#d0703e" stroke-width="1.6" fill="none"/></svg></div>
<div class="a t12" style="left:24.8px;top:471.5px;color:#e8e8e8">ui.js</div>
<div class="a t12" style="left:214.6px;top:471.5px;color:#e8e8e8">200</div>
<div class="a t12" style="left:278.4px;top:471.5px;color:#e8e8e8">script</div>
<div class="a t12" style="left:341.8px;top:471.5px;color:#e8e8e8;text-decoration:underline;">index.html:2223</div>
<div class="a t12 r" style="left:445px;width:57px;text-align:right;top:471.5px;color:#e8e8e8">3.9 kB</div>
<div class="a t12 r" style="left:506px;width:61px;text-align:right;top:471.5px;color:#e8e8e8">472 ms</div>
<div class="a" style="left:575.6px;top:473.5px;width:4.6px;height:8px;background:#d8d8e4"></div><div class="a" style="left:580px;top:472px;width:2.5px;height:11px;background:#3f9ad8"></div>
<div class="a" style="left:0;top:488px;width:751px;height:21px;background:#282828"></div>
<div class="a" style="left:5.5px;top:492px"><svg class="ic" viewBox="0 0 14 14"><rect x="1.5" y="1.5" width="11" height="11" rx="1.5" fill="none" stroke="#d0703e" stroke-width="2"/><path d="M5 5.5v3M9 5.5v3" stroke="#d0703e" stroke-width="1.6" fill="none"/></svg></div>
<div class="a t12" style="left:24.8px;top:492.5px;color:#e8e8e8">bootstrap-datetimepicker.js</div>
<div class="a t12" style="left:214.6px;top:492.5px;color:#e8e8e8">200</div>
<div class="a t12" style="left:278.4px;top:492.5px;color:#e8e8e8">script</div>
<div class="a t12" style="left:341.8px;top:492.5px;color:#e8e8e8;text-decoration:underline;">index.html:2225</div>
<div class="a t12 r" style="left:445px;width:57px;text-align:right;top:492.5px;color:#e8e8e8">13.5 kB</div>
<div class="a t12 r" style="left:506px;width:61px;text-align:right;top:492.5px;color:#e8e8e8">469 ms</div>
<div class="a" style="left:575.6px;top:494.5px;width:4.6px;height:8px;background:#d8d8e4"></div><div class="a" style="left:580px;top:493px;width:2.5px;height:11px;background:#3f9ad8"></div>
<div class="a" style="left:0;top:509px;width:751px;height:21px;background:#202020"></div>
<div class="a" style="left:5.5px;top:513px"><svg class="ic" viewBox="0 0 14 14"><rect x="1.5" y="1.5" width="11" height="11" rx="1.5" fill="none" stroke="#d0703e" stroke-width="2"/><path d="M5 5.5v3M9 5.5v3" stroke="#d0703e" stroke-width="1.6" fill="none"/></svg></div>
<div class="a t12" style="left:24.8px;top:513.5px;color:#e8e8e8">jquery-1.9.1.min.js</div>
<div class="a t12" style="left:214.6px;top:513.5px;color:#e8e8e8">200</div>
<div class="a t12" style="left:278.4px;top:513.5px;color:#e8e8e8">script</div>
<div class="a t12" style="left:341.8px;top:513.5px;color:#e8e8e8;text-decoration:underline;">index.html:2212</div>
<div class="a t12 r" style="left:445px;width:57px;text-align:right;top:513.5px;color:#e8e8e8">35.2 kB</div>
<div class="a t12 r" style="left:506px;width:61px;text-align:right;top:513.5px;color:#e8e8e8">473 ms</div>
<div class="a" style="left:575.6px;top:515.5px;width:4.6px;height:8px;background:#d8d8e4"></div><div class="a" style="left:580px;top:514px;width:2.5px;height:11px;background:#3f9ad8"></div>
<div class="a" style="left:0;top:530px;width:751px;height:21px;background:#282828"></div>
<div class="a" style="left:5.5px;top:534px"><svg class="ic" viewBox="0 0 14 14"><rect x="1.5" y="1.5" width="11" height="11" rx="1.5" fill="none" stroke="#d0703e" stroke-width="2"/><path d="M5 5.5v3M9 5.5v3" stroke="#d0703e" stroke-width="1.6" fill="none"/></svg></div>
<div class="a t12" style="left:24.8px;top:534.5px;color:#e8e8e8">bootstrap-datetimepicker.all.js</div>
<div class="a t12" style="left:214.6px;top:534.5px;color:#e8e8e8">200</div>
<div class="a t12" style="left:278.4px;top:534.5px;color:#e8e8e8">script</div>
<div class="a t12" style="left:341.8px;top:534.5px;color:#e8e8e8;text-decoration:underline;">index.html:2226</div>
<div class="a t12 r" style="left:445px;width:57px;text-align:right;top:534.5px;color:#e8e8e8">8.6 kB</div>
<div class="a t12 r" style="left:506px;width:61px;text-align:right;top:534.5px;color:#e8e8e8">237 ms</div>
<div class="a" style="left:575.6px;top:536.5px;width:4.6px;height:8px;background:#d8d8e4"></div><div class="a" style="left:580px;top:535px;width:2.5px;height:11px;background:#3f9ad8"></div>
<div class="a" style="left:0;top:551px;width:751px;height:21px;background:#202020"></div>
<div class="a" style="left:5.5px;top:555px"><svg class="ic" viewBox="0 0 14 14"><rect x="3" y="0.5" width="8" height="13" fill="#c9b8a0"/><rect x="4" y="4" width="6" height="3" fill="#3a5a8a"/><rect x="4" y="9" width="6" height="2" fill="#3a5a8a" opacity=".7"/></svg></div>
<div class="a t12" style="left:24.8px;top:555.5px;color:#e8e8e8">37f118b4a56d866e1e8b563759...</div>
<div class="a t12" style="left:214.6px;top:555.5px;color:#e8e8e8">200</div>
<div class="a t12" style="left:278.4px;top:555.5px;color:#e8e8e8">jpeg</div>
<div class="a t12" style="left:341.8px;top:555.5px;color:#e8e8e8;text-decoration:underline;">index.html:2199</div>
<div class="a t12 r" style="left:445px;width:57px;text-align:right;top:555.5px;color:#e8e8e8">12.1 kB</div>
<div class="a t12 r" style="left:506px;width:61px;text-align:right;top:555.5px;color:#e8e8e8">236 ms</div>
<div class="a" style="left:575.6px;top:557.5px;width:4.6px;height:8px;background:#d8d8e4"></div><div class="a" style="left:583px;top:556px;width:2.5px;height:11px;background:#3f9ad8"></div>
<div class="a" style="left:0;top:572px;width:751px;height:21px;background:#282828"></div>
<div class="a" style="left:5.5px;top:576px"><svg class="ic" viewBox="0 0 14 14"><rect x="3" y="0.5" width="8" height="13" fill="#6a8a6a"/><rect x="4" y="4" width="6" height="3" fill="#d9c9a9"/><rect x="4" y="9" width="6" height="2" fill="#d9c9a9" opacity=".7"/></svg></div>
<div class="a t12" style="left:24.8px;top:576.5px;color:#e8e8e8">449ed681142bc336646abee754...</div>
<div class="a t12" style="left:214.6px;top:576.5px;color:#e8e8e8">200</div>
<div class="a t12" style="left:278.4px;top:576.5px;color:#e8e8e8">jpeg</div>
<div class="a t12" style="left:341.8px;top:576.5px;color:#e8e8e8;text-decoration:underline;">index.html:2199</div>
<div class="a t12 r" style="left:445px;width:57px;text-align:right;top:576.5px;color:#e8e8e8">12.4 kB</div>
<div class="a t12 r" style="left:506px;width:61px;text-align:right;top:576.5px;color:#e8e8e8">243 ms</div>
<div class="a" style="left:575.6px;top:578.5px;width:4.6px;height:8px;background:#d8d8e4"></div><div class="a" style="left:583px;top:577px;width:2.5px;height:11px;background:#3f9ad8"></div>
<div class="a" style="left:0;top:593px;width:751px;height:21px;background:#202020"></div>
<div class="a" style="left:5.5px;top:597px"><svg class="ic" viewBox="0 0 14 14"><rect x="3" y="0.5" width="8" height="13" fill="#f0e8d0"/><rect x="4" y="4" width="6" height="3" fill="#2a4a6a"/><rect x="4" y="9" width="6" height="2" fill="#2a4a6a" opacity=".7"/></svg></div>
<div class="a t12" style="left:24.8px;top:597.5px;color:#e8e8e8">3c91d97266bd6dda322089695f...</div>
<div class="a t12" style="left:214.6px;top:597.5px;color:#e8e8e8">200</div>
<div class="a t12" style="left:278.4px;top:597.5px;color:#e8e8e8">jpeg</div>
<div class="a t12" style="left:341.8px;top:597.5px;color:#e8e8e8;text-decoration:underline;">index.html:2199</div>
<div class="a t12 r" style="left:445px;width:57px;text-align:right;top:597.5px;color:#e8e8e8">10.3 kB</div>
<div class="a t12 r" style="left:506px;width:61px;text-align:right;top:597.5px;color:#e8e8e8">237 ms</div>
<div class="a" style="left:575.6px;top:599.5px;width:4.6px;height:8px;background:#d8d8e4"></div><div class="a" style="left:583px;top:598px;width:2.5px;height:11px;background:#3f9ad8"></div>
<div class="a" style="left:0;top:614px;width:751px;height:21px;background:#282828"></div>
<div class="a" style="left:5.5px;top:618px"><svg class="ic" viewBox="0 0 14 14"><rect x="3" y="0.5" width="8" height="13" fill="#e85a2a"/><rect x="4" y="4" width="6" height="3" fill="#f0d0b0"/><rect x="4" y="9" width="6" height="2" fill="#f0d0b0" opacity=".7"/></svg></div>
<div class="a t12" style="left:24.8px;top:618.5px;color:#e8e8e8">e8c0ba15066bab950ae161fd609...</div>
<div class="a t12" style="left:214.6px;top:618.5px;color:#e8e8e8">200</div>
<div class="a t12" style="left:278.4px;top:618.5px;color:#e8e8e8">jpeg</div>
<div class="a t12" style="left:341.8px;top:618.5px;color:#e8e8e8;text-decoration:underline;">index.html:2199</div>
<div class="a t12 r" style="left:445px;width:57px;text-align:right;top:618.5px;color:#e8e8e8">11.5 kB</div>
<div class="a t12 r" style="left:506px;width:61px;text-align:right;top:618.5px;color:#e8e8e8">234 ms</div>
<div class="a" style="left:575.6px;top:620.5px;width:4.6px;height:8px;background:#d8d8e4"></div><div class="a" style="left:583px;top:619px;width:2.5px;height:11px;background:#3f9ad8"></div>
<div class="a" style="left:0;top:635px;width:751px;height:21px;background:#202020"></div>
<div class="a" style="left:5.5px;top:639px"><svg class="ic" viewBox="0 0 14 14"><rect x="3" y="0.5" width="8" height="13" fill="#b8502a"/><rect x="4" y="4" width="6" height="3" fill="#e8c080"/><rect x="4" y="9" width="6" height="2" fill="#e8c080" opacity=".7"/></svg></div>
<div class="a t12" style="left:24.8px;top:639.5px;color:#e8e8e8">8fa41d6caa10e427356b8a590eb...</div>
<div class="a t12" style="left:214.6px;top:639.5px;color:#e8e8e8">200</div>
<div class="a t12" style="left:278.4px;top:639.5px;color:#e8e8e8">jpeg</div>
<div class="a t12" style="left:341.8px;top:639.5px;color:#e8e8e8;text-decoration:underline;">index.html:2199</div>
<div class="a t12 r" style="left:445px;width:57px;text-align:right;top:639.5px;color:#e8e8e8">12.4 kB</div>
<div class="a t12 r" style="left:506px;width:61px;text-align:right;top:639.5px;color:#e8e8e8">246 ms</div>
<div class="a" style="left:575.6px;top:641.5px;width:4.6px;height:8px;background:#d8d8e4"></div><div class="a" style="left:583px;top:640px;width:2.5px;height:11px;background:#3f9ad8"></div>
<div class="a" style="left:0;top:656px;width:751px;height:21px;background:#282828"></div>
<div class="a" style="left:5.5px;top:660px"><svg class="ic" viewBox="0 0 14 14"><rect x="3" y="0.5" width="8" height="13" fill="#3a6ab0"/><rect x="4" y="4" width="6" height="3" fill="#e0e8f0"/><rect x="4" y="9" width="6" height="2" fill="#e0e8f0" opacity=".7"/></svg></div>
<div class="a t12" style="left:24.8px;top:660.5px;color:#e8e8e8">2352718971d5e166fa9541a5a7d...</div>
<div class="a t12" style="left:214.6px;top:660.5px;color:#e8e8e8">200</div>
<div class="a t12" style="left:278.4px;top:660.5px;color:#e8e8e8">jpeg</div>
<div class="a t12" style="left:341.8px;top:660.5px;color:#e8e8e8;text-decoration:underline;">index.html:2199</div>
<div class="a t12 r" style="left:445px;width:57px;text-align:right;top:660.5px;color:#e8e8e8">12.6 kB</div>
<div class="a t12 r" style="left:506px;width:61px;text-align:right;top:660.5px;color:#e8e8e8">247 ms</div>
<div class="a" style="left:575.6px;top:662.5px;width:4.6px;height:8px;background:#d8d8e4"></div><div class="a" style="left:583px;top:661px;width:2.5px;height:11px;background:#3f9ad8"></div>
<div class="a" style="left:0;top:677px;width:751px;height:21px;background:#202020"></div>
<div class="a" style="left:5.5px;top:681px"><svg class="ic" viewBox="0 0 14 14"><rect x="3" y="0.5" width="8" height="13" fill="#3a6a4a"/><rect x="4" y="4" width="6" height="3" fill="#c0d0c0"/><rect x="4" y="9" width="6" height="2" fill="#c0d0c0" opacity=".7"/></svg></div>
<div class="a t12" style="left:24.8px;top:681.5px;color:#e8e8e8">c38d65cd155b67ca025f0655bd1...</div>
<div class="a t12" style="left:214.6px;top:681.5px;color:#e8e8e8">200</div>
<div class="a t12" style="left:278.4px;top:681.5px;color:#e8e8e8">jpeg</div>
<div class="a t12" style="left:341.8px;top:681.5px;color:#e8e8e8;text-decoration:underline;">index.html:2199</div>
<div class="a t12 r" style="left:445px;width:57px;text-align:right;top:681.5px;color:#e8e8e8">11.9 kB</div>
<div class="a t12 r" style="left:506px;width:61px;text-align:right;top:681.5px;color:#e8e8e8">247 ms</div>
<div class="a" style="left:575.6px;top:683.5px;width:4.6px;height:8px;background:#d8d8e4"></div><div class="a" style="left:583px;top:682px;width:2.5px;height:11px;background:#3f9ad8"></div>
<div class="a" style="left:0;top:698px;width:751px;height:21px;background:#282828"></div>
<div class="a" style="left:5.5px;top:702px"><svg class="ic" viewBox="0 0 14 14"><rect x="3" y="0.5" width="8" height="13" fill="#e8e8f0"/><rect x="4" y="4" width="6" height="3" fill="#6a8ac0"/><rect x="4" y="9" width="6" height="2" fill="#6a8ac0" opacity=".7"/></svg></div>
<div class="a t12" style="left:24.8px;top:702.5px;color:#e8e8e8">8bbc5ab4c3784b4d9b93eb0fd1f...</div>
<div class="a t12" style="left:214.6px;top:702.5px;color:#e8e8e8">200</div>
<div class="a t12" style="left:278.4px;top:702.5px;color:#e8e8e8">jpeg</div>
<div class="a t12" style="left:341.8px;top:702.5px;color:#e8e8e8;text-decoration:underline;">index.html:2199</div>
<div class="a t12 r" style="left:445px;width:57px;text-align:right;top:702.5px;color:#e8e8e8">7.9 kB</div>
<div class="a t12 r" style="left:506px;width:61px;text-align:right;top:702.5px;color:#e8e8e8">244 ms</div>
<div class="a" style="left:575.6px;top:704.5px;width:4.6px;height:8px;background:#d8d8e4"></div><div class="a" style="left:583px;top:703px;width:2.5px;height:11px;background:#3f9ad8"></div>
<div class="a" style="left:0;top:719px;width:751px;height:21px;background:#202020"></div>
<div class="a" style="left:5.5px;top:723px"><svg class="ic" viewBox="0 0 14 14"><rect x="3" y="0.5" width="8" height="13" fill="#8ab84a"/><rect x="4" y="4" width="6" height="3" fill="#e0b070"/><rect x="4" y="9" width="6" height="2" fill="#e0b070" opacity=".7"/></svg></div>
<div class="a t12" style="left:24.8px;top:723.5px;color:#e8e8e8">5707c3d5d4fd44d943d51730ba...</div>
<div class="a t12" style="left:214.6px;top:723.5px;color:#e8e8e8">200</div>
<div class="a t12" style="left:278.4px;top:723.5px;color:#e8e8e8">jpeg</div>
<div class="a t12" style="left:341.8px;top:723.5px;color:#e8e8e8;text-decoration:underline;">index.html:2199</div>
<div class="a t12 r" style="left:445px;width:57px;text-align:right;top:723.5px;color:#e8e8e8">9.2 kB</div>
<div class="a t12 r" style="left:506px;width:61px;text-align:right;top:723.5px;color:#e8e8e8">243 ms</div>
<div class="a" style="left:575.6px;top:725.5px;width:4.6px;height:8px;background:#d8d8e4"></div><div class="a" style="left:583px;top:724px;width:2.5px;height:11px;background:#3f9ad8"></div>
<div class="a" style="left:0;top:740px;width:751px;height:21px;background:#282828"></div>
<div class="a" style="left:5.5px;top:744px"><svg class="ic" viewBox="0 0 14 14"><rect x="3" y="0.5" width="8" height="13" fill="#2a5a9a"/><rect x="4" y="4" width="6" height="3" fill="#d0d8e0"/><rect x="4" y="9" width="6" height="2" fill="#d0d8e0" opacity=".7"/></svg></div>
<div class="a t12" style="left:24.8px;top:744.5px;color:#e8e8e8">d58157866ea8f015a8e4c55b23b...</div>
<div class="a t12" style="left:214.6px;top:744.5px;color:#e8e8e8">200</div>
<div class="a t12" style="left:278.4px;top:744.5px;color:#e8e8e8">jpeg</div>
<div class="a t12" style="left:341.8px;top:744.5px;color:#e8e8e8;text-decoration:underline;">index.html:2199</div>
<div class="a t12 r" style="left:445px;width:57px;text-align:right;top:744.5px;color:#e8e8e8">12.4 kB</div>
<div class="a t12 r" style="left:506px;width:61px;text-align:right;top:744.5px;color:#e8e8e8">236 ms</div>
<div class="a" style="left:575.6px;top:746.5px;width:4.6px;height:8px;background:#d8d8e4"></div><div class="a" style="left:583px;top:745px;width:2.5px;height:11px;background:#3f9ad8"></div>
<div class="a" style="left:0;top:761px;width:751px;height:21px;background:#202020"></div>
<div class="a" style="left:5.5px;top:765px"><svg class="ic" viewBox="0 0 14 14"><rect x="3" y="0.5" width="8" height="13" fill="#f0f0f0"/><rect x="4" y="4" width="6" height="3" fill="#b04040"/><rect x="4" y="9" width="6" height="2" fill="#b04040" opacity=".7"/></svg></div>
<div class="a t12" style="left:24.8px;top:765.5px;color:#e8e8e8">fd71fb07247bf911505a351c067...</div>
<div class="a t12" style="left:214.6px;top:765.5px;color:#e8e8e8">200</div>
<div class="a t12" style="left:278.4px;top:765.5px;color:#e8e8e8">jpeg</div>
<div class="a t12" style="left:341.8px;top:765.5px;color:#e8e8e8;text-decoration:underline;">index.html:2199</div>
<div class="a t12 r" style="left:445px;width:57px;text-align:right;top:765.5px;color:#e8e8e8">8.2 kB</div>
<div class="a t12 r" style="left:506px;width:61px;text-align:right;top:765.5px;color:#e8e8e8">241 ms</div>
<div class="a" style="left:575.6px;top:767.5px;width:4.6px;height:8px;background:#d8d8e4"></div><div class="a" style="left:583px;top:766px;width:2.5px;height:11px;background:#3f9ad8"></div>
<div class="a" style="left:0;top:782px;width:751px;height:21px;background:#282828"></div>
<div class="a" style="left:5.5px;top:786px"><svg class="ic" viewBox="0 0 14 14"><rect x="3" y="0.5" width="8" height="13" fill="#e8a020"/><rect x="4" y="4" width="6" height="3" fill="#6a3a10"/><rect x="4" y="9" width="6" height="2" fill="#6a3a10" opacity=".7"/></svg></div>
<div class="a t12" style="left:24.8px;top:786.5px;color:#e8e8e8">900bd2e60d56b6480a4e8eb2dd...</div>
<div class="a t12" style="left:214.6px;top:786.5px;color:#e8e8e8">200</div>
<div class="a t12" style="left:278.4px;top:786.5px;color:#e8e8e8">jpeg</div>
<div class="a t12" style="left:341.8px;top:786.5px;color:#e8e8e8;text-decoration:underline;">index.html:2199</div>
<div class="a t12 r" style="left:445px;width:57px;text-align:right;top:786.5px;color:#e8e8e8">10.4 kB</div>
<div class="a t12 r" style="left:506px;width:61px;text-align:right;top:786.5px;color:#e8e8e8">241 ms</div>
<div class="a" style="left:575.6px;top:788.5px;width:4.6px;height:8px;background:#d8d8e4"></div><div class="a" style="left:583px;top:787px;width:2.5px;height:11px;background:#3f9ad8"></div>
<div class="a" style="left:0;top:803px;width:751px;height:21px;background:#202020"></div>
<div class="a" style="left:5.5px;top:807px"><svg class="ic" viewBox="0 0 14 14"><rect x="3" y="0.5" width="8" height="13" fill="#2a4a8a"/><rect x="4" y="4" width="6" height="3" fill="#7aa0d0"/><rect x="4" y="9" width="6" height="2" fill="#7aa0d0" opacity=".7"/></svg></div>
<div class="a t12" style="left:24.8px;top:807.5px;color:#e8e8e8">c7abb5e32bd37118a87523dcee...</div>
<div class="a t12" style="left:214.6px;top:807.5px;color:#e8e8e8">200</div>
<div class="a t12" style="left:278.4px;top:807.5px;color:#e8e8e8">jpeg</div>
<div class="a t12" style="left:341.8px;top:807.5px;color:#e8e8e8;text-decoration:underline;">index.html:2199</div>
<div class="a t12 r" style="left:445px;width:57px;text-align:right;top:807.5px;color:#e8e8e8">9.4 kB</div>
<div class="a t12 r" style="left:506px;width:61px;text-align:right;top:807.5px;color:#e8e8e8">230 ms</div>
<div class="a" style="left:575.6px;top:809.5px;width:4.6px;height:8px;background:#d8d8e4"></div><div class="a" style="left:583px;top:808px;width:2.5px;height:11px;background:#3f9ad8"></div>
<div class="a" style="left:0;top:824px;width:751px;height:21px;background:#282828"></div>
<div class="a" style="left:5.5px;top:828px"><svg class="ic" viewBox="0 0 14 14"><rect x="3" y="0.5" width="8" height="13" fill="#5a9a6a"/><rect x="4" y="4" width="6" height="3" fill="#c0e0c0"/><rect x="4" y="9" width="6" height="2" fill="#c0e0c0" opacity=".7"/></svg></div>
<div class="a t12" style="left:24.8px;top:828.5px;color:#e8e8e8">95d75416d794ebd579b8a4f2b472...</div>
<div class="a t12" style="left:214.6px;top:828.5px;color:#e8e8e8">200</div>
<div class="a t12" style="left:278.4px;top:828.5px;color:#e8e8e8">jpeg</div>
<div class="a t12" style="left:341.8px;top:828.5px;color:#e8e8e8;text-decoration:underline;">index.html:2199</div>
<div class="a t12 r" style="left:445px;width:57px;text-align:right;top:828.5px;color:#e8e8e8">8.8 kB</div>
<div class="a t12 r" style="left:506px;width:61px;text-align:right;top:828.5px;color:#e8e8e8">235 ms</div>
<div class="a" style="left:575.6px;top:830.5px;width:4.6px;height:8px;background:#d8d8e4"></div><div class="a" style="left:583px;top:829px;width:2.5px;height:11px;background:#3f9ad8"></div>
<div class="a" style="left:209.8px;top:208px;width:1px;height:630px;background:#3d3d3d"></div>
<div class="a" style="left:272.6px;top:208px;width:1px;height:630px;background:#3d3d3d"></div>
<div class="a" style="left:336px;top:208px;width:1px;height:630px;background:#3d3d3d"></div>
<div class="a" style="left:442.6px;top:208px;width:1px;height:630px;background:#3d3d3d"></div>
<div class="a" style="left:503px;top:208px;width:1px;height:630px;background:#3d3d3d"></div>
<div class="a" style="left:567.8px;top:208px;width:1px;height:630px;background:#3d3d3d"></div>
<div class="a" style="left:728.6px;top:236px;width:1px;height:602px;background:#3a3a3a"></div>
<div class="a" style="left:578.6px;top:236px;width:1.6px;height:602px;background:#34528c"></div>
<div class="a" style="left:581.4px;top:236px;width:1.6px;height:602px;background:#6e2a2e"></div>
<div class="a" style="left:750px;top:236px;width:18px;height:602px;background:#393939"></div>
<div class="a" style="left:753px;top:254px;width:13px;height:416px;background:#5f5f5f"></div>
<svg class="a" style="left:755px;top:243px" width="9" height="5" viewBox="0 0 9 5"><path d="M0 5h9L4.5 0z" fill="#aaa"/></svg>
<svg class="a" style="left:755px;top:825px" width="9" height="5" viewBox="0 0 9 5"><path d="M0 0h9L4.5 5z" fill="#aaa"/></svg>
<div class="a" style="left:0;top:837.5px;width:768px;height:27px;background:#282828;border-top:1px solid #3d3d3d"></div>
<div class="a t12" style="left:10.75px;top:845.5px;color:#e3e3e3">39 requests</div>
<div class="a t12" style="left:90.2px;top:845.5px;color:#e3e3e3">360 kB transferred</div>
<div class="a t12" style="left:207.4px;top:845.5px;color:#e3e3e3">778 kB resources</div>
<div class="a t12" style="left:314.4px;top:845.5px;color:#e3e3e3">Finish: 57.05 s</div>
<div class="a t12" style="left:407px;top:845.5px;color:#f29e5e">DOMContentLoaded: 2.12 s</div>
<div class="a t12" style="left:571.8px;top:845.5px;color:#7cacf8">Load: 2.84 s</div>
<div class="a" style="left:78.2px;top:843px;width:1px;height:15px;background:#4a4a4a"></div>
<div class="a" style="left:196.8px;top:843px;width:1px;height:15px;background:#4a4a4a"></div>
<div class="a" style="left:304.8px;top:843px;width:1px;height:15px;background:#4a4a4a"></div>
<div class="a" style="left:398.4px;top:843px;width:1px;height:15px;background:#4a4a4a"></div>
<div class="a" style="left:564.3px;top:843px;width:1px;height:15px;background:#4a4a4a"></div>
</div>
</div></body></html>
